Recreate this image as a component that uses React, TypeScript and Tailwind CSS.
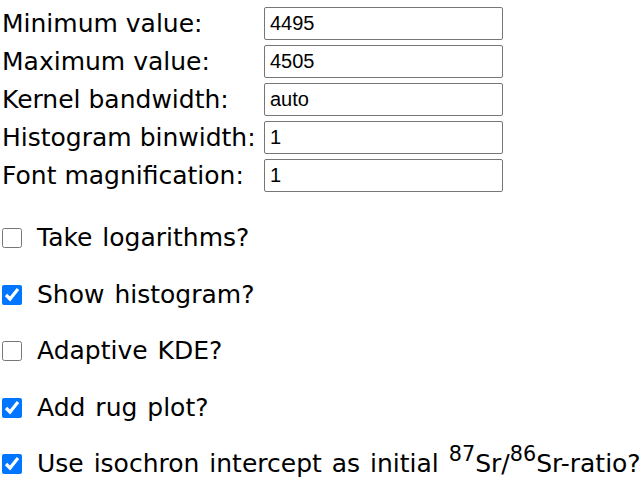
import { useState } from 'react'

type Field = { label: string; value: string }

const fields: Field[] = [
  { label: 'Minimum value:', value: '4495' },
  { label: 'Maximum value:', value: '4505' },
  { label: 'Kernel bandwidth:', value: 'auto' },
  { label: 'Histogram binwidth:', value: '1' },
  { label: 'Font magnification:', value: '1' },
]

export default function App() {
  const [values, setValues] = useState(fields.map(f => f.value))
  const [checks, setChecks] = useState([false, true, false, true, true])

  const toggle = (i: number) =>
    setChecks(c => c.map((v, j) => (j === i ? !v : v)))

  const options: React.ReactNode[] = [
    'Take logarithms?',
    'Show histogram?',
    'Adaptive KDE?',
    'Add rug plot?',
    <>Use isochron intercept as initial <sup className="text-[0.83em] -top-[0.55em]">87</sup>Sr/<sup className="text-[0.83em] -top-[0.55em]">86</sup>Sr-ratio?</>,
  ]

  return (
    <div className="w-[644px] h-[478px] bg-white text-black overflow-hidden font-['DejaVu_Sans',Verdana,sans-serif] text-[25px] leading-[28px]">

      {/* Settings fields */}
      <div className="grid grid-cols-[264px_239px] gap-y-[5px] pt-[7px]">
        {fields.map((f, i) => (
          <div key={f.label} className="contents">
            <label className="flex items-center pl-[2px] whitespace-nowrap">{f.label}</label>
            <input
              type="text"
              value={values[i]}
              onChange={e => setValues(v => v.map((x, j) => (j === i ? e.target.value : x)))}
              className="h-[33px] w-[239px] border border-[#767676] rounded-[2px] px-[5px] font-['Liberation_Sans',Arial,sans-serif] text-[20px] text-black focus:outline-none"
            />
          </div>
        ))}
      </div>

      {/* Checkbox options */}
      <div className="flex flex-col gap-[24.5px] mt-[30px]">
        {options.map((o, i) => (
          <label key={i} className="flex items-center gap-[15px] pl-[2px] h-[32px] whitespace-nowrap">
            <input
              type="checkbox"
              checked={checks[i]}
              onChange={() => toggle(i)}
              className="w-[20px] h-[20px] m-0 accent-[#0075ff]"
            />
            <span className="[word-spacing:2px]">{o}</span>
          </label>
        ))}
      </div>
    </div>
  )
}
